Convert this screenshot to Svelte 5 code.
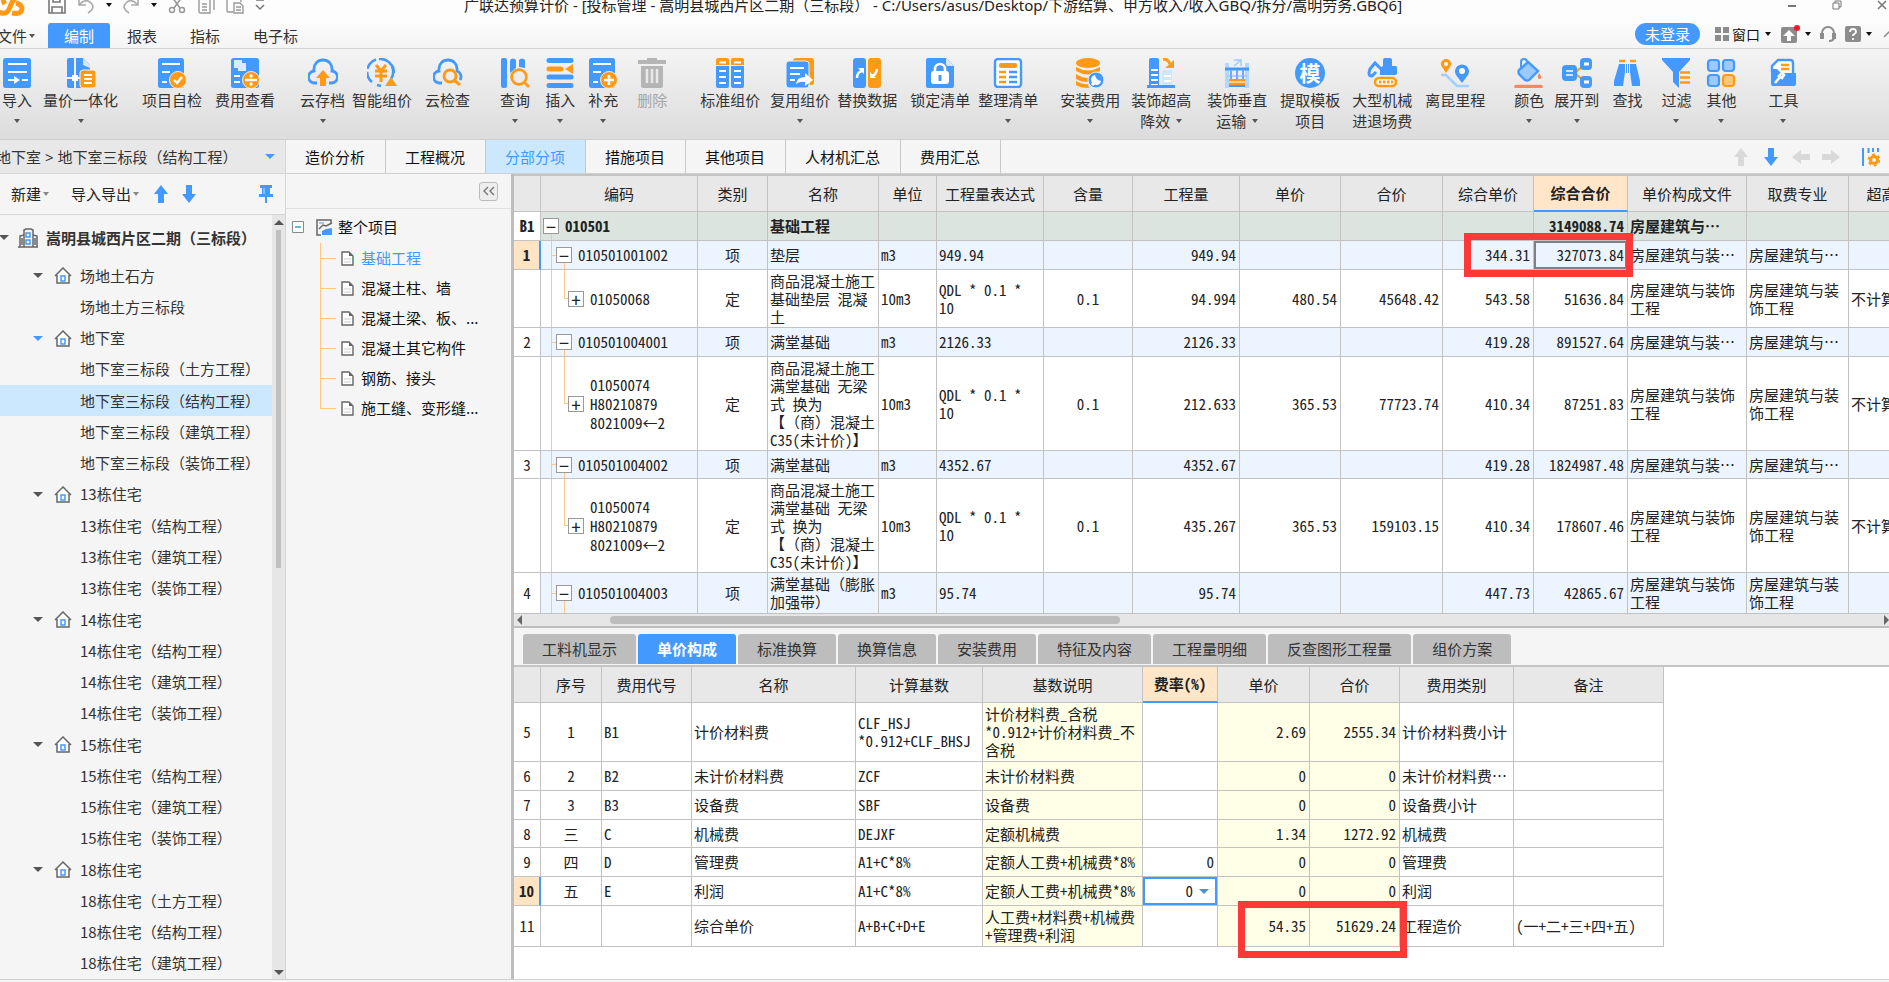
<script>
    const B = '#4499ff';
    const O = '#ff9a16';

    // inner markup of the 30x30 toolbar icons
    const icons = {
        import: `<rect x="1" width="28" height="30" rx="2.5" fill="${B}"/><path d="M6 6h19M6 14h19M6 22h9M20 22h6" stroke="#fff" stroke-width="2"/><path d="M12 18l6 4-6 4z" fill="#fff"/>`,
        quantity: `<path d="M1 2a2 2 0 0 1 2-2h14l7 7v23H3a2 2 0 0 1-2-2z" fill="${B}"/><path d="M17 0l7 7v3l-7-3z" fill="#d3e8ff"/><path d="M9 0v30M0 20h15" stroke="#f2f2f2" stroke-width="2"/><rect x="6" y="17" width="6" height="6" fill="#fff"/><rect x="14" y="12" width="16" height="18" rx="3" fill="${O}" stroke="#efefef"/><path d="M18 17h8M18 21h8M18 25h8" stroke="#fff" stroke-width="2"/>`,
        check: `<rect x="1" width="26" height="30" rx="2.5" fill="${B}"/><path d="M5 6h18M5 14h8M5 24h5" stroke="#fff" stroke-width="2"/><circle cx="21" cy="22" r="8.5" fill="${O}" stroke="#eee"/><path d="M17 22l3 3 5-6" fill="none" stroke="#fff" stroke-width="2.4"/>`,
        fee: `<rect x="1" width="28" height="30" rx="2.5" fill="${B}"/><path d="M4 2h8v8H4zM8 5h8v8H8z" fill="#d9ebff"/><path d="M4 18h6M4 24h6" stroke="#fff" stroke-width="2.2"/><circle cx="21" cy="22" r="8.5" fill="${O}" stroke="#eee"/><path d="M15 22h12" stroke="#fff" stroke-width="2.4"/><circle cx="21" cy="18" r="1.7" fill="#fff"/><circle cx="21" cy="26" r="1.7" fill="#fff"/>`,
        cloudUp: `<path d="M9 25H7a6 6 0 0 1-1-12C5 6 10 2 15 2s10 4 9 11a6 6 0 0 1-1 12h-2" fill="none" stroke="${B}" stroke-width="2.8"/><path d="M15 12l7 8h-4v8h-6v-8H8z" fill="${O}"/>`,
        smart: `<path d="M24 21A13 13 0 1 0 5 24M10 27l4 1M22 4l4 5 1 6" fill="none" stroke="${B}" stroke-width="2.6" stroke-dasharray="13 3"/><path d="M9 7l5 6 5-6M8 13h12M8 18h12M14 13v11" fill="none" stroke="${O}" stroke-width="3"/><path d="M24 19l6 9H18z" fill="${O}"/>`,
        cloudFind: `<path d="M9 25H7a6 6 0 0 1-1-12C5 6 10 2 15 2s10 4 9 11a6 6 0 0 1 3 9" fill="none" stroke="${B}" stroke-width="2.8"/><circle cx="17" cy="18" r="6" fill="none" stroke="${O}" stroke-width="2.8"/><path d="M21 22l6 5" stroke="${O}" stroke-width="3"/>`,
        query: `<rect x="1" width="6" height="30" rx="2" fill="${B}"/><path d="M10 2q3-3 6 0v8l-6 5zM19 2q3-3 6 0v8l-6-1z" fill="${B}"/><circle cx="19" cy="19" r="7.4" fill="none" stroke="${O}" stroke-width="2.6"/><path d="M24 24l5 5" stroke="${O}" stroke-width="2.8"/>`,
        insert: `<path d="M4 2.500h22M4 19h22M4 27.500h22" stroke="${B}" stroke-width="5" stroke-linecap="round"/><path d="M4 11h12" stroke="${O}" stroke-width="5" stroke-linecap="round"/><path d="M28 6v10l-8-5z" fill="${O}"/>`,
        add: `<rect x="1" width="26" height="30" rx="2.500" fill="${B}"/><path d="M5 6h18M5 14h8M5 24h5" stroke="#fff" stroke-width="2"/><circle cx="21" cy="22" r="8.5" fill="${O}" stroke="#eee"/><path d="M16 22h10M21 17v10" stroke="#fff" stroke-width="2.6"/>`,
        trash: `<path d="M10 0h10v2h9v4H1V2h9zM4 8h22v20q0 2-2 2H6q-2 0-2-2z" fill="#b5b5b5"/><path d="M10 11v14M15 11v14M20 11v14" stroke="#e9e9e9" stroke-width="2.5"/>`,
        standard: `<path d="M1 7V2q0-2 2-2h9q2 0 2 2v5zM16 7V2q0-2 2-2h9q2 0 2 2v5z" fill="${O}"/><path d="M1 8h13v20q0 2-2 2H3q-2 0-2-2zM16 8h13v20q0 2-2 2h-9q-2 0-2-2z" fill="${B}"/><path d="M4 4.500h7M19 4.500h7M4 13h7M19 13h7M4 19h7M19 19h7M4 25h7M19 25h7" stroke="#fff" stroke-width="2"/>`,
        reuse: `<rect x="8" width="21" height="27" rx="3" fill="${O}"/><rect x="1" y="3" width="23" height="27" rx="3" fill="${B}" stroke="#eee"/><path d="M5 10h14M5 16h10M5 22h5" stroke="#fff" stroke-width="2"/><path d="M11 26q1-7 9-7v-4l8 7-8 6v-4q-5-1-9 2z" fill="#fff"/>`,
        replace: `<rect x="1" width="13" height="30" rx="3" fill="${B}"/><rect x="16" width="13" height="30" rx="3" fill="${O}"/><path d="M5 20q0-6 5-7M20 18q4-1 5-7" stroke="#fff" stroke-width="2.4" fill="none"/><path d="M6 10h6v6zM18 14v6h6z" fill="#fff"/>`,
        lock: `<path d="M3 0h18l8 8v20q0 2-2 2H3q-2 0-2-2V2q0-2 2-2z" fill="${B}"/><path d="M21 0v6q0 2 2 2h6z" fill="#d3e8ff"/><rect x="6" y="13" width="18" height="13" rx="3" fill="#fff"/><path d="M10 14v-3a5 5 0 0 1 10 0v3" stroke="#fff" stroke-width="2.6" fill="none"/><path d="M15 17v6" stroke="${B}" stroke-width="3"/>`,
        arrange: `<rect x="2" y="1" width="26" height="28" rx="3" fill="#fff" stroke="${B}" stroke-width="2.4"/><rect x="6" y="5" width="18" height="5" rx="2" fill="${O}"/><path d="M6 14h7M6 19h7M6 24h7" stroke="${O}" stroke-width="2.4"/><path d="M16 14h8M16 19h8M16 24h8" stroke="${B}" stroke-width="2.4"/>`,
        install: `<ellipse cx="13" cy="5" rx="12" ry="5" fill="${O}"/><path d="M1 9q12 7 24 0v4q-12 7-24 0zM1 16q6 4 12 4v4Q6 24 1 21zM1 23q6 4 12 3l1 4Q5 30 1 27z" fill="${O}"/><circle cx="21" cy="22" r="8" fill="${B}" stroke="#eee"/><path d="M17 27l4-4" stroke="#fff" stroke-width="3"/><path d="M20 17a5 5 0 1 0 6 6l-3-1-2-2z" fill="#fff"/>`,
        high: `<path d="M3 30V2q0-2 2-2h6q2 0 2 2v28z" fill="${B}"/><path d="M5 12h7M5 17h7M5 22h7M5 27h7" stroke="#fff" stroke-width="2"/><path d="M16 28V14q0-2 2-2h8v16z" fill="#cfe6ff"/><path d="M18 18h7M18 23h7" stroke="#fff" stroke-width="2"/><path d="M1 28.500h28" stroke="${B}" stroke-width="3"/><path d="M17 1q5 0 7 5" fill="none" stroke="${O}" stroke-width="3"/><path d="M19 10h9V2z" fill="${O}"/>`,
        vertical: `<path d="M3 5h4v25H3zM23 5h4v25h-4z" fill="#b5d7ff"/><path d="M5 18h20M12 2h7v6M12 8l7-6" stroke="#9ccaff" stroke-width="1.5" fill="none"/><path d="M3 11h24" stroke="${B}" stroke-width="3"/><path d="M9 12v9M15 12v9M21 12v9" stroke="#6badff" stroke-width="2"/><path d="M7 21h16v6H7z" fill="${O}"/><path d="M7 24h16" stroke="#fff"/><path d="M7 28h16" stroke="${B}" stroke-width="2"/>`,
        template: `<circle cx="15" cy="15" r="15" fill="${B}"/><text x="15" y="23" text-anchor="middle" font-size="21" font-weight="700" fill="#fff">模</text>`,
        machine: `<path d="M13 17V10l3-2V2q0-2 2-2h5q2 0 2 2v6h4q1 0 1 2v5q0 2-3 2z" fill="${B}"/><path d="M15 12L8 5 3 11l-1 4q0 3 3 3l4-4" fill="none" stroke="${B}" stroke-width="3"/><rect x="8" y="20" width="21" height="8" rx="4" fill="#fff" stroke="${O}" stroke-width="2.6"/><path d="M12 24h14" stroke="${O}" stroke-width="3" stroke-dasharray="2.500 1.500"/>`,
        mileage: `<path d="M6 15L2 9A5 5 0 1 1 10 9z" fill="${O}"/><circle cx="6" cy="6" r="2" fill="#fff"/><path d="M22 25L16 17a7 7 0 1 1 12 0z" fill="${B}"/><circle cx="22" cy="13" r="3" fill="#fff"/><path d="M1 17h5l11 11h12" stroke="#a3cfff" stroke-width="2.6" fill="none"/>`,
        color: `<path d="M7 10V4q0-3 3-3t3 3" fill="none" stroke="${B}" stroke-width="2"/><path d="M14 4l10 9-9 9q-2 1-4 0l-6-6q-1-2 0-4z" fill="#9ccaff" stroke="${B}" stroke-width="2.4"/><path d="M25 15q4 5 1 6-4 0-1-6z" fill="#fb8761"/><path d="M2 28.500h25" stroke="#fb8761" stroke-width="3.5" stroke-linecap="round"/>`,
        expand: `<path d="M14 14l8-7M14 16l8 7" stroke="${O}" stroke-width="2"/><rect x="0" y="7" width="15" height="16" rx="4" fill="${B}"/><path d="M4 13h7M4 17h7" stroke="#cfe5ff" stroke-width="2"/><rect x="18" width="12" height="12" rx="4" fill="${B}"/><rect x="18" y="18" width="12" height="12" rx="4" fill="${B}"/><path d="M22 6h5M22 24h5" stroke="#fff" stroke-width="3"/>`,
        find: `<path d="M7 3h6M18 3h6" stroke="${O}" stroke-width="2.4"/><path d="M7 6h6v8l-2 14H2V23zM18 6h6l4 17v5h-8l-2-14z" fill="${B}"/><path d="M14 6h1v9h-1zM16 6h1v9h-1z" fill="${B}"/>`,
        filter: `<path d="M1 0h28v2L18 14v16l-6-6V14L1 2z" fill="${B}"/><path d="M19 14.500h10M19 19.500h10M19 24.500h10" stroke="${O}" stroke-width="2.6"/>`,
        other: `<g stroke-width="2.2"><rect x="2" y="2" width="11" height="11" rx="3" fill="#9ccaff" stroke="${B}"/><rect x="17" y="2" width="11" height="11" rx="3" fill="#9ccaff" stroke="${B}"/><rect x="2" y="17" width="11" height="11" rx="3" fill="#9ccaff" stroke="${B}"/><rect x="17" y="17" width="11" height="11" rx="3" fill="#ffc77d" stroke="${O}"/></g>`,
        tools: `<path d="M4 14V8l6-6h12q3 0 3 3v10" fill="#fff" stroke="${B}" stroke-width="2.4"/><path d="M13 7h8M13 11h8" stroke="${O}" stroke-width="2.4"/><path d="M3 12q0-1 2-1h4l4 4h15v11q0 2-2 2H5q-2 0-2-2z" fill="${B}"/><path d="M7 25l5-6M14 15l-3 3 3 2 2-3z" stroke="#fff" stroke-width="2.6" fill="none"/>`
    };

    // gap is the distance to the button on the left
    const ribbon = [
        { icon: 'import', label: '导入', gap: 2, menu: true },
        { icon: 'quantity', label: '量价一体化', gap: 11, menu: true },
        { icon: 'check', label: '项目自检', gap: 24 },
        { icon: 'fee', label: '费用查看', gap: 13 },
        { icon: 'cloudUp', label: '云存档', gap: 25, menu: true },
        { icon: 'smart', label: '智能组价', gap: 7 },
        { icon: 'cloudFind', label: '云检查', gap: 13 },
        { icon: 'query', label: '查询', gap: 30, menu: true },
        { icon: 'insert', label: '插入', gap: 15, menu: true },
        { icon: 'add', label: '补充', gap: 13, menu: true },
        { icon: 'trash', label: '删除', gap: 19, disabled: true },
        { icon: 'standard', label: '标准组价', gap: 33 },
        { icon: 'reuse', label: '复用组价', gap: 10, menu: true },
        { icon: 'replace', label: '替换数据', gap: 7 },
        { icon: 'lock', label: '锁定清单', gap: 13 },
        { icon: 'arrange', label: '整理清单', gap: 8, menu: true },
        { icon: 'install', label: '安装费用', gap: 22, menu: true },
        { icon: 'high', label: '装饰超高', second: '降效', gap: 11, menu: true },
        { icon: 'vertical', label: '装饰垂直', second: '运输', gap: 16, menu: true },
        { icon: 'template', label: '提取模板', second: '项目', gap: 13 },
        { icon: 'machine', label: '大型机械', second: '进退场费', gap: 12 },
        { icon: 'mileage', label: '离昆里程', gap: 13 },
        { icon: 'color', label: '颜色', gap: 29, menu: true },
        { icon: 'expand', label: '展开到', gap: 10, menu: true },
        { icon: 'find', label: '查找', gap: 13 },
        { icon: 'filter', label: '过滤', gap: 19, menu: true },
        { icon: 'other', label: '其他', gap: 15, menu: true },
        { icon: 'tools', label: '工具', gap: 32, menu: true }
    ];

    const menus = ['编制', '报表', '指标', '电子标'];
    let activeMenu = '编制';

    const pages = ['造价分析', '工程概况', '分部分项', '措施项目', '其他项目', '人材机汇总', '费用汇总'];
    let activePage = '分部分项';

    const tree = [
        { name: '场地土石方', items: ['场地土方三标段'] },
        { name: '地下室', open: true, items: ['地下室三标段（土方工程）', '地下室三标段（结构工程）', '地下室三标段（建筑工程）', '地下室三标段（装饰工程）'] },
        { name: '13栋住宅', items: ['13栋住宅（结构工程）', '13栋住宅（建筑工程）', '13栋住宅（装饰工程）'] },
        { name: '14栋住宅', items: ['14栋住宅（结构工程）', '14栋住宅（建筑工程）', '14栋住宅（装饰工程）'] },
        { name: '15栋住宅', items: ['15栋住宅（结构工程）', '15栋住宅（建筑工程）', '15栋住宅（装饰工程）'] },
        { name: '18栋住宅', items: ['18栋住宅（土方工程）', '18栋住宅（结构工程）', '18栋住宅（建筑工程）'] }
    ];
    let activeNode = '地下室三标段（结构工程）';

    const sections = ['基础工程', '混凝土柱、墙', '混凝土梁、板、...', '混凝土其它构件', '钢筋、接头', '施工缝、变形缝...'];
    let activeSection = '基础工程';

    const billCols = [
        { w: 27, t: '' },
        { w: 157, t: '编码' },
        { w: 70, t: '类别' },
        { w: 111, t: '名称' },
        { w: 58, t: '单位' },
        { w: 107, t: '工程量表达式' },
        { w: 89, t: '含量' },
        { w: 107, t: '工程量' },
        { w: 101, t: '单价' },
        { w: 102, t: '合价' },
        { w: 91, t: '综合单价' },
        { w: 94, t: '综合合价' },
        { w: 119, t: '单价构成文件' },
        { w: 102, t: '取费专业' },
        { w: 66, t: '超高' }
    ];
    const FILE = '房屋建筑与装饰\n工程';
    const MAJOR = '房屋建筑与装\n饰工程';
    const SLAB = '商品混凝土施工\n满堂基础 无梁\n式 换为\n【（商）混凝土\nC35(未计价)】';
    const EXPR = 'QDL * 0.1 *\n10';
    const bill = [
        { lv: 0, h: 29, no: 'B1', c: ['010501', '', '基础工程', '', '', '', '', '', '', '', '3149088.74', '房屋建筑与…', '', ''] },
        { lv: 1, h: 29, no: '1', on: true, c: ['010501001002', '项', '垫层', 'm3', '949.94', '', '949.94', '', '', '344.31', '327073.84', '房屋建筑与装…', '房屋建筑与…', ''] },
        { lv: 2, h: 58, no: '', c: ['01050068', '定', '商品混凝土施工\n基础垫层 混凝\n土', '10m3', EXPR, '0.1', '94.994', '480.54', '45648.42', '543.58', '51636.84', FILE, MAJOR, '不计算'] },
        { lv: 1, h: 29, no: '2', c: ['010501004001', '项', '满堂基础', 'm3', '2126.33', '', '2126.33', '', '', '419.28', '891527.64', '房屋建筑与装…', '房屋建筑与…', ''] },
        { lv: 2, h: 94, no: '', c: ['01050074\nH80210879\n8021009←2', '定', SLAB, '10m3', EXPR, '0.1', '212.633', '365.53', '77723.74', '410.34', '87251.83', FILE, MAJOR, '不计算'] },
        { lv: 1, h: 28, no: '3', c: ['010501004002', '项', '满堂基础', 'm3', '4352.67', '', '4352.67', '', '', '419.28', '1824987.48', '房屋建筑与装…', '房屋建筑与…', ''] },
        { lv: 2, h: 94, no: '', c: ['01050074\nH80210879\n8021009←2', '定', SLAB, '10m3', EXPR, '0.1', '435.267', '365.53', '159103.15', '410.34', '178607.46', FILE, MAJOR, '不计算'] },
        { lv: 1, h: 41, no: '4', c: ['010501004003', '项', '满堂基础（膨胀\n加强带）', 'm3', '95.74', '', '95.74', '', '', '447.73', '42865.67', FILE, MAJOR, ''] }
    ];
    const billAlign = ['', 'mid', '', '', '', 'mid', 'num', 'num', 'num', 'num', 'num', '', '', ''];

    const details = ['工料机显示', '单价构成', '标准换算', '换算信息', '安装费用', '特征及内容', '工程量明细', '反查图形工程量', '组价方案'];
    let activeDetail = '单价构成';

    const priceCols = [
        { w: 27, t: '' },
        { w: 61, t: '序号' },
        { w: 90, t: '费用代号' },
        { w: 164, t: '名称' },
        { w: 127, t: '计算基数' },
        { w: 160, t: '基数说明' },
        { w: 75, t: '费率(%)' },
        { w: 92, t: '单价' },
        { w: 90, t: '合价' },
        { w: 114, t: '费用类别' },
        { w: 150, t: '备注' }
    ];
    const priceAlign = ['mid', '', '', '', 'calc', 'num', 'num calc', 'num calc', '', ''];
    const price = [
        { no: '5', h: 59, c: ['1', 'B1', '计价材料费', 'CLF_HSJ\n*0.912+CLF_BHSJ', '计价材料费_含税\n*0.912+计价材料费_不\n含税', '', '2.69', '2555.34', '计价材料费小计', ''] },
        { no: '6', h: 29, c: ['2', 'B2', '未计价材料费', 'ZCF', '未计价材料费', '', '0', '0', '未计价材料费…', ''] },
        { no: '7', h: 29, c: ['3', 'B3', '设备费', 'SBF', '设备费', '', '0', '0', '设备费小计', ''] },
        { no: '8', h: 28, c: ['三', 'C', '机械费', 'DEJXF', '定额机械费', '', '1.34', '1272.92', '机械费', ''] },
        { no: '9', h: 29, c: ['四', 'D', '管理费', 'A1+C*8%', '定额人工费+机械费*8%', '0', '0', '0', '管理费', ''] },
        { no: '10', h: 29, on: true, c: ['五', 'E', '利润', 'A1+C*8%', '定额人工费+机械费*8%', '0', '0', '0', '利润', ''] },
        { no: '11', h: 41, c: ['', '', '综合单价', 'A+B+C+D+E', '人工费+材料费+机械费\n+管理费+利润', '', '54.35', '51629.24', '工程造价', '(一+二+三+四+五)'] }
    ];
    let rate = '0';
</script>

{#snippet arrow(dir, color)}
    <svg class="arrow {dir}" width="20" height="20" viewBox="0 0 20 20"><path d="M10 1l7 9h-4v9H7v-9H3z" fill={color} /></svg>
{/snippet}

<div class="app">
    <header class="title">
        <div class="quick">
            <svg class="logo" width="26" height="24" viewBox="0 0 26 24"><path d="M0 19q8 4 11-5t9-11M6 11q-4-6 1-8M13 20q10 2 10-5-1-4-6-5" fill="none" stroke="#ff9a16" stroke-width="5" /></svg>
            <button aria-label="保存"><svg width="18" height="18" viewBox="0 0 18 18"><path d="M1 1h13l3 3v13H1zM4 17v-6h10v6M5 1v5h7V1" fill="none" stroke="#777" stroke-width="1.600" /></svg></button>
            <button aria-label="撤销"><svg width="18" height="18" viewBox="0 0 18 18"><path d="M2 2v7h7M3 8q6-6 11-1t-3 10" fill="none" stroke="#aaa" stroke-width="1.600" /></svg></button>
            <i class="caret dark"></i>
            <button class="redo" aria-label="重做"><svg width="18" height="18" viewBox="0 0 18 18"><path d="M16 2v7H9M15 8Q9 2 4 7t3 10" fill="none" stroke="#aaa" stroke-width="1.600" /></svg></button>
            <i class="caret dark"></i>
            <button class="cut" aria-label="剪切"><svg width="18" height="18" viewBox="0 0 18 18"><path d="M4 1l8 11M14 1L6 12" stroke="#999" stroke-width="1.600" /><circle cx="4" cy="14" r="2.500" fill="none" stroke="#999" stroke-width="1.500" /><circle cx="14" cy="14" r="2.500" fill="none" stroke="#999" stroke-width="1.500" /></svg></button>
            <button aria-label="复制"><svg width="18" height="18" viewBox="0 0 18 18"><path d="M5 1h10q2 0 2 2v11M2 3h9q2 0 2 2v12H4q-2 0-2-2zM5 8h5M5 11h5M5 14h5" fill="none" stroke="#999" stroke-width="1.400" /></svg></button>
            <button aria-label="粘贴"><svg width="18" height="18" viewBox="0 0 18 18"><path d="M7 16H2q-1 0-1-2V2h14v4M8 7h6l3 3v7H8zM10 11h5M10 14h5" fill="none" stroke="#999" stroke-width="1.400" /></svg></button>
            <svg width="10" height="12" viewBox="0 0 10 12"><path d="M1 1h8M1 6l4 4 4-4" fill="none" stroke="#777" stroke-width="1.500" /></svg>
        </div>
        <h1>广联达预算计价 - [投标管理 - 嵩明县城西片区二期（三标段） - C:/Users/asus/Desktop/下游结算、甲方收入/收入GBQ/拆分/嵩明劳务.GBQ6]</h1>
        <div class="window">
            <button aria-label="最小化"><svg width="10" height="10" viewBox="0 0 10 10"><path d="M1 6h8" stroke="#777" stroke-width="2" /></svg></button>
            <button aria-label="还原"><svg width="10" height="10" viewBox="0 0 10 10"><path d="M1 3h6v6H1zM3 3V1h6v6H7" fill="none" stroke="#777" /></svg></button>
            <button aria-label="关闭"><svg width="10" height="10" viewBox="0 0 10 10"><path d="M1 1l8 8M9 1L1 9" stroke="#777" stroke-width="1.500" /></svg></button>
        </div>
    </header>

    <nav class="menubar">
        <button class="file">文件<i class="caret"></i></button>
        {#each menus as m}
            <button class="menu" class:active={m === activeMenu} on:click={() => (activeMenu = m)}>{m}</button>
        {/each}
        <div class="account">
            <button class="login">未登录</button>
            <button class="win">
                <svg width="14" height="14" viewBox="0 0 14 14"><path d="M0 0h6v6H0zM8 0h6v6H8zM0 8h6v6H0zM8 8h6v6H8z" fill="#8c8c8c" /></svg>
                窗口<i class="caret dark"></i>
            </button>
            <button class="tool" aria-label="升级">
                <svg width="20" height="20" viewBox="0 0 20 20"><rect x="1" y="3" width="16" height="16" rx="2" fill="#8c8c8c" /><path d="M9 6l6 6h-4v5H7v-5H3z" fill="#fff" /><circle cx="17" cy="4" r="3" fill="#f0182a" /></svg>
                <i class="caret dark"></i>
            </button>
            <button class="tool" aria-label="客服"><svg width="18" height="18" viewBox="0 0 18 18"><path d="M3 10V8a6 6 0 0 1 12 0v4q0 4-5 4" fill="none" stroke="#8c8c8c" stroke-width="2" /><path d="M1 8h4v6H1zM13 8h4v6h-4z" fill="#8c8c8c" /></svg></button>
            <button class="tool" aria-label="帮助"><svg width="16" height="16" viewBox="0 0 16 16"><rect width="16" height="16" rx="2" fill="#8c8c8c" /><path d="M5 6q0-3 3-3t3 3q0 1-3 3v1M8 12v2" fill="none" stroke="#fff" stroke-width="1.800" /></svg><i class="caret dark"></i></button>
            <svg width="12" height="8" viewBox="0 0 12 8"><path d="M1 7l5-5 5 5" fill="none" stroke="#888" stroke-width="1.500" /></svg>
        </div>
    </nav>

    <div class="ribbon">
        {#each ribbon as r}
            <button disabled={r.disabled} style="margin-left:{r.gap}px">
                <svg width="30" height="30" viewBox="0 0 30 30">{@html icons[r.icon]}</svg>
                <span>{r.label}</span>
                <span class="second">{r.second ?? ''}{#if r.menu}<i class="caret"></i>{/if}</span>
            </button>
        {/each}
    </div>

    <div class="body">
        <aside class="project">
            <button class="crumb">地下室 &gt; 地下室三标段（结构工程）<i class="caret big blue"></i></button>
            <div class="bar">
                <button>新建<i class="caret"></i></button>
                <button class="io">导入导出<i class="caret"></i></button>
                <button aria-label="上移">{@render arrow('up', B)}</button>
                <button aria-label="下移">{@render arrow('down', B)}</button>
                <button class="pin" aria-label="固定"><svg width="14" height="20" viewBox="0 0 14 20"><path d="M1 1h12v3h-2v6h3v3H8v6H6v-6H0v-3h3V4H1z" fill={B} /><path d="M5 4v6" stroke="#cde4ff" /></svg></button>
            </div>
            <div class="treebox">
                <ul class="tree">
                    <li class="root">
                        <i class="caret big"></i>
                        <svg width="20" height="20" viewBox="0 0 20 20"><path d="M6 19V2l2-1h5l2 1v17M6 7l-4 1v11M15 7l4 1v11M0 19h20M4 10v7M17 10v7" fill="none" stroke="#666" stroke-width="1.500" /><path d="M8 5h4v4H8zM8 12h4v4H8z" fill="none" stroke={B} stroke-width="1.500" /></svg>
                        {'嵩明县城西片区二期（三标段）'}
                    </li>
                    {#each tree as g}
                        <li class="group">
                            <i class="caret big" class:blue={g.open}></i>
                            <svg width="18" height="17" viewBox="0 0 18 17"><path d="M1 9l8-8 8 8M3 8v8h12V8" fill="#fff" stroke="#666" stroke-width="1.500" /><path d="M7 9h4v5H7z" fill="none" stroke={B} stroke-width="1.500" /></svg>
                            {g.name}
                        </li>
                        {#each g.items as name}
                            <li class="leaf" class:active={name === activeNode}>
                                <button on:click={() => (activeNode = name)}>{name}</button>
                            </li>
                        {/each}
                    {/each}
                </ul>
                <div class="vscroll">
                    <i class="caret big flip"></i>
                    <div class="track"><div class="thumb"></div></div>
                    <i class="caret big"></i>
                </div>
            </div>
        </aside>

        <div class="work">
            <div class="pages">
                {#each pages as p}
                    <button class:active={p === activePage} on:click={() => (activePage = p)}>{p}</button>
                {/each}
                <div class="moves">
                    <button aria-label="上移">{@render arrow('up', '#d9d9d9')}</button>
                    <button aria-label="下移">{@render arrow('down', B)}</button>
                    <button aria-label="左移">{@render arrow('left', '#d9d9d9')}</button>
                    <button aria-label="右移">{@render arrow('right', '#d9d9d9')}</button>
                    <button class="columns" aria-label="列设置"><svg width="18" height="20" viewBox="0 0 18 20"><path d="M1 1v18M6.500 1v5M11 1v4M16 1v4" stroke={B} stroke-width="2" /><circle cx="12" cy="13" r="3.500" fill="none" stroke={O} stroke-width="3" /><circle cx="12" cy="13" r="5.500" fill="none" stroke={O} stroke-width="2" stroke-dasharray="2.900 2.900" /></svg></button>
                </div>
            </div>

            <div class="split">
                <aside class="sections">
                    <div class="fold"><button aria-label="收起"><svg width="14" height="12" viewBox="0 0 14 12"><path d="M6 2L2 6l4 4M12 2L8 6l4 4" fill="none" stroke="#777" stroke-width="1.400" /></svg></button></div>
                    <div class="whole">
                        <svg width="12" height="12" viewBox="0 0 12 12"><path d="M.5.5h11v11H.5z" fill="#fff" stroke="#888" /><path d="M3 6h6" stroke="#35a3c8" stroke-width="1.500" /></svg>
                        <svg width="17" height="17" viewBox="0 0 17 17"><path d="M15 4V1H1v15h4M3 10l4-4 3 1 6-3" fill="none" stroke="#666" stroke-width="1.500" /><path d="M6 16v-4l4-2 6-1v7z" fill={B} /><path d="M3 4h5" stroke={B} /></svg>
                        <span>整个项目</span>
                    </div>
                    <ul>
                        {#each sections as s}
                            <li>
                                <svg width="13" height="15" viewBox="0 0 13 15"><path d="M1 1h7l4 4v9H1z" fill="#fff" stroke="#666" stroke-width="1.400" /><path d="M8 1v4h4z" fill="#666" /><path d="M3 8h7M3 11h7" stroke="#ccc" /></svg>
                                <button class:active={s === activeSection} on:click={() => (activeSection = s)}>{s}</button>
                            </li>
                        {/each}
                    </ul>
                </aside>

                <main>
                    <div class="grid">
                        <table class="bill">
                            <colgroup>
                                {#each billCols as col}<col style="width:{col.w}px" />{/each}
                            </colgroup>
                            <thead>
                                <tr>{#each billCols as col, i}<th class:hot={i === 11}>{col.t}</th>{/each}</tr>
                            </thead>
                            <tbody>
                                {#each bill as row}
                                    <tr class="lv{row.lv}" style="height:{row.h}px">
                                        <th class:current={row.on}>{row.no}</th>
                                        {#each row.c as cell, i}
                                            {#if i === 0}
                                                <td class="code">
                                                    <div><button aria-label="展开或收起">{row.lv === 2 ? '+' : '−'}</button><span>{cell}</span></div>
                                                </td>
                                            {:else}
                                                <td class={billAlign[i]} class:picked={row.on && i === 10}>{cell}</td>
                                            {/if}
                                        {/each}
                                    </tr>
                                {/each}
                            </tbody>
                        </table>
                        <div class="mark top"></div>
                    </div>
                    <div class="hscroll">
                        <i class="tri left"></i>
                        <div class="track"><div class="thumb"></div></div>
                        <i class="tri right"></i>
                    </div>

                    <div class="details">
                        {#each details as d}
                            <button class:active={d === activeDetail} on:click={() => (activeDetail = d)}>{d}</button>
                        {/each}
                    </div>
                    <div class="grid lower">
                        <table class="price">
                            <colgroup>
                                {#each priceCols as col}<col style="width:{col.w}px" />{/each}
                            </colgroup>
                            <thead>
                                <tr>{#each priceCols as col, i}<th class:hot={i === 6}>{col.t}</th>{/each}</tr>
                            </thead>
                            <tbody>
                                {#each price as row}
                                    <tr style="height:{row.h}px">
                                        <th class:current={row.on}>{row.no}</th>
                                        {#each row.c as cell, i}
                                            {#if row.on && i === 5}
                                                <td class="edit">
                                                    <div>
                                                        <select aria-label="费率" bind:value={rate}><option>0</option></select>
                                                        <i class="caret big steel"></i>
                                                    </div>
                                                </td>
                                            {:else}
                                                <td class={priceAlign[i]}>{cell}</td>
                                            {/if}
                                        {/each}
                                    </tr>
                                {/each}
                            </tbody>
                        </table>
                        <div class="mark bottom"></div>
                    </div>
                </main>
            </div>
        </div>
    </div>
    <footer></footer>
</div>

<style>
    :global(body) {
        margin: 0;
        overflow: hidden;
    }

    .app {
        display: flex;
        flex-direction: column;
        height: 100vh;
        overflow: hidden;
        background: #f5f5f5;
        color: #333;
        font: 15px/20px 'Noto Sans CJK SC', sans-serif;
        text-spacing-trim: space-all;
    }

    button {
        display: flex;
        align-items: center;
        padding: 0;
        border: 0;
        background: none;
        color: inherit;
        font: inherit;
        white-space: nowrap;
    }

    ul {
        margin: 0;
        padding: 0;
        list-style: none;
    }

    svg {
        flex: none;
        display: block;
    }

    .caret {
        flex: none;
        border: 3px solid transparent;
        border-top: 4px solid #555;
        border-bottom: 0;
    }
    .caret.dark {
        border-top-color: #111;
    }
    .caret.big {
        border-width: 5px 5px 0;
    }
    .caret.blue {
        border-top-color: #4499ff;
    }
    .caret.steel {
        border-top-color: #4a93c8;
    }
    .caret.flip {
        transform: rotate(180deg);
    }

    .arrow.down {
        transform: rotate(180deg);
    }
    .arrow.left {
        transform: rotate(-90deg);
    }
    .arrow.right {
        transform: rotate(90deg);
    }

    /* the window sits partly above the top edge of the screen */
    .title {
        flex: none;
        display: flex;
        align-items: center;
        height: 36px;
        margin-top: -13px;
        background: #fdfdfd;
    }
    .quick {
        flex: none;
        display: flex;
        align-items: center;
        gap: 11px;
        width: 464px;
    }
    .quick .logo {
        margin: 0 12px 0 -1px;
    }
    .redo {
        margin-left: -1px;
    }
    .title h1 {
        margin: 0;
        font-family: 'Noto Sans', 'Noto Sans CJK SC', sans-serif;
        font-size: 15px;
        font-weight: 400;
        white-space: nowrap;
        color: #222;
    }
    .window {
        display: flex;
        gap: 35px;
        margin-left: auto;
        padding-right: 2px;
    }

    .menubar {
        flex: none;
        display: flex;
        gap: 1px;
        height: 25px;
        border-bottom: 1px solid #d4d4d4;
        background: linear-gradient(#fcfcfc, #f4f4f4);
    }
    .file {
        gap: 2px;
        margin: 0 12px 0 -3px;
    }
    .menu {
        padding: 0 16px;
        border-radius: 3px 3px 0 0;
    }
    .menu.active {
        background: #4499ff;
        color: #fff;
    }
    .account {
        display: flex;
        align-items: center;
        margin-left: auto;
        height: 22px;
    }
    .login {
        height: 22px;
        padding: 0 10px;
        border-radius: 11px;
        background: #4499ff;
        color: #fff;
    }
    .win {
        margin-left: 15px;
        gap: 3px;
        font-size: 14px;
        color: #111;
    }
    .win .caret {
        margin-left: 2px;
    }
    .tool {
        gap: 5px;
        margin-left: 9px;
    }
    .tool + .tool {
        margin-left: 8px;
    }
    .account > svg {
        margin: 0 -6px 0 11px;
    }

    .ribbon {
        flex: none;
        display: flex;
        align-items: flex-start;
        height: 90px;
        border-bottom: 1px solid #d0d0d0;
        background: linear-gradient(#f4f4f4, #dcdcdc);
    }
    .ribbon button {
        flex: none;
        flex-direction: column;
        padding-top: 9px;
    }
    .ribbon button:disabled {
        color: #a5a5a5;
    }
    .ribbon span {
        height: 20px;
        margin-top: 2px;
    }
    .ribbon .second {
        display: flex;
        align-items: center;
        gap: 6px;
        margin-top: 1px;
    }

    .body {
        flex: 1;
        display: flex;
        min-height: 0;
    }

    .project {
        flex: none;
        display: flex;
        flex-direction: column;
        width: 285px;
        border-right: 1px solid #d6d6d6;
    }
    .crumb {
        flex: none;
        justify-content: space-between;
        height: 34px;
        padding-right: 10px;
        margin-left: -4px;
        background: #e8e8e8;
        border-bottom: 1px solid #d6d6d6;
        font-family: 'Noto Sans', 'Noto Sans CJK SC', sans-serif;
    }
    .project .bar {
        flex: none;
        display: flex;
        align-items: center;
        height: 40px;
        padding: 0 12px 0 11px;
        border-bottom: 1px solid #d6d6d6;
    }
    .bar button {
        gap: 2px;
        margin-right: 8px;
        color: #222;
    }
    .bar .io {
        margin: 0 12px 0 14px;
    }
    .bar .caret {
        border-top-color: #888;
    }
    .bar .pin {
        margin: 0 0 0 auto;
    }
    .treebox {
        flex: 1;
        display: flex;
        min-height: 0;
    }
    .tree {
        flex: 1;
        display: flex;
        flex-direction: column;
    }
    .tree li {
        flex: 1;
        display: flex;
        align-items: center;
    }
    .tree .root {
        flex: none;
        height: 45px;
        gap: 8px;
        font-weight: 700;
    }
    .root .caret {
        margin: 0 1px 0 -1px;
    }
    .group {
        gap: 8px;
        padding-left: 33px;
    }
    .group svg {
        margin-left: 3px;
    }
    .leaf {
        padding-left: 80px;
    }
    .leaf.active {
        background: #cce8ff;
    }
    .vscroll {
        display: flex;
        flex-direction: column;
        align-items: center;
        width: 13px;
        padding: 5px 0 4px;
        background: #e6e6e6;
    }
    .vscroll .track {
        flex: 1;
        width: 5px;
        padding: 5px 0;
    }
    .vscroll .thumb {
        height: 46%;
        background: #bfbfbf;
    }

    .work {
        flex: 1;
        display: flex;
        flex-direction: column;
        min-width: 0;
    }
    .pages {
        flex: none;
        display: flex;
        height: 33px;
        border-bottom: 1px solid #d0d0d0;
    }
    .pages > button {
        padding: 0 20px 0 19px;
        border-right: 1px solid #c8c8c8;
        color: #111;
    }
    .pages > button.active {
        background: #cce8ff;
        color: #4499ff;
    }
    .moves {
        display: flex;
        align-items: center;
        gap: 10px;
        margin-left: auto;
        padding-right: 9px;
    }
    .columns {
        margin-left: 11px;
    }

    .split {
        flex: 1;
        display: flex;
        min-height: 0;
    }
    .sections {
        flex: none;
        width: 225px;
        border-right: 3px solid #bdbdbd;
        color: #111;
    }
    .fold {
        display: flex;
        align-items: center;
        justify-content: flex-end;
        height: 34px;
        padding-right: 13px;
        border-bottom: 1px solid #e0e0e0;
    }
    .fold button {
        justify-content: center;
        width: 19px;
        height: 19px;
        border: 1px solid #bbb;
        border-radius: 3px;
        background: #eee;
    }
    .whole {
        display: flex;
        align-items: center;
        height: 32px;
        padding: 2px 0 0 6px;
    }
    .whole svg + svg {
        margin: 0 5px 0 12px;
    }
    .sections ul {
        padding-left: 34px;
    }
    .sections li {
        display: flex;
        align-items: center;
        gap: 7px;
        height: 30px;
        padding-left: 21px;
        background:
            linear-gradient(#ffc880, #ffc880) 0 0 / 1px 100% no-repeat,
            linear-gradient(#ffc880, #ffc880) 0 50% / 16px 1px no-repeat;
    }
    .sections li:last-child {
        background:
            linear-gradient(#ffc880, #ffc880) 0 0 / 1px 50% no-repeat,
            linear-gradient(#ffc880, #ffc880) 0 50% / 16px 1px no-repeat;
    }
    .sections li button.active {
        color: #4499ff;
    }

    main {
        flex: 1;
        display: flex;
        flex-direction: column;
        min-width: 0;
        background: #fff;
    }
    .grid {
        position: relative;
        flex: none;
        overflow: hidden;
        border-top: 2px solid #c4c4c4;
        font-family: 'Noto Sans Mono CJK SC', 'Noto Sans CJK SC', monospace;
    }
    .lower {
        flex: 1;
    }
    table {
        width: 0;
        table-layout: fixed;
        border-collapse: separate;
        border-spacing: 0;
        color: #222;
        line-height: 18px;
    }
    th,
    td {
        box-sizing: border-box;
        height: inherit;
        padding: 0 2px;
        border-right: 1px solid #c2c2c2;
        border-bottom: 1px solid #c2c2c2;
        font-weight: 400;
        text-align: left;
        white-space: pre;
        overflow: hidden;
    }
    thead tr {
        height: 36px;
    }
    thead th {
        padding: 0;
        background: #e8e8e8;
        text-align: center;
    }
    thead th.hot {
        background: #ffe6c8;
        border-bottom: 2px solid #4499ff;
        font-weight: 700;
    }
    tbody th {
        padding: 0;
        background: #fff;
        text-align: center;
    }
    tbody th.current {
        background: #ffe4c4;
        border-right: 2px solid #4499ff;
        font-weight: 700;
    }
    .mid {
        text-align: center;
    }
    .num {
        padding-right: 3px;
        text-align: right;
    }
    .calc {
        background: #ffffe8;
    }
    .lv0 th,
    .lv0 td {
        font-weight: 700;
    }
    .lv0 td {
        background-color: #dbe4de;
    }
    .lv1 td {
        background-color: #ecf4ff;
    }
    .code div {
        display: flex;
        align-items: center;
        gap: 6px;
    }
    .code button {
        box-sizing: border-box;
        justify-content: center;
        width: 16px;
        height: 16px;
        border: 1px solid #999;
        background: #fff;
        font-size: 18px;
        font-weight: 400;
        line-height: 14px;
    }
    /* connector lines of the outline */
    .lv0 .code {
        background: linear-gradient(#ffc880, #ffc880) 10px 22px / 1px 100% no-repeat #dbe4de;
    }
    .lv1 .code {
        padding-left: 15px;
        background:
            linear-gradient(#ffc880, #ffc880) 10px 0 / 1px 100% no-repeat,
            linear-gradient(#ffc880, #ffc880) 10px 50% / 5px 1px no-repeat,
            linear-gradient(#ffc880, #ffc880) 23px 100% / 1px 50% no-repeat #ecf4ff;
    }
    .lv2 .code {
        padding-left: 27px;
        line-height: 19px;
        background:
            linear-gradient(#ffc880, #ffc880) 10px 0 / 1px 100% no-repeat,
            linear-gradient(#ffc880, #ffc880) 23px 0 / 1px 50% no-repeat,
            linear-gradient(#ffc880, #ffc880) 23px 50% / 5px 1px no-repeat;
    }
    td.picked {
        box-shadow: inset 0 0 0 2px #808080;
    }
    .edit {
        padding: 0;
        box-shadow: inset 0 0 0 2px #4499ff;
    }
    .edit div {
        display: flex;
        align-items: center;
        padding-right: 8px;
    }
    .edit select {
        flex: 1;
        appearance: none;
        padding: 0 6px 0 0;
        border: 0;
        background: none;
        color: inherit;
        font: inherit;
        text-align-last: right;
    }

    .mark {
        position: absolute;
        box-sizing: border-box;
        width: 169px;
        border: 7px solid #fc3939;
    }
    .mark.top {
        left: 950px;
        top: 57px;
        height: 44px;
    }
    .mark.bottom {
        left: 724px;
        top: 234px;
        height: 57px;
    }

    .hscroll {
        flex: none;
        display: flex;
        align-items: center;
        height: 12px;
        padding: 0 0 0 3px;
        background: #e6e6e6;
        border-bottom: 2px solid #bdbdbd;
    }
    .hscroll .track {
        flex: 1;
        padding-left: 88px;
    }
    .hscroll .thumb {
        width: 40%;
        height: 8px;
        border-radius: 4px;
        background: #bdbdbd;
    }
    .tri {
        border: 5px solid transparent;
    }
    .tri.left {
        border-left: 0;
        border-right-color: #666;
    }
    .tri.right {
        border-right: 0;
        border-left-color: #666;
    }

    .details {
        flex: none;
        display: flex;
        gap: 2px;
        height: 31px;
        padding: 6px 0 0 9px;
        background: #f5f5f5;
    }
    .details button {
        height: 30px;
        padding: 0 19px;
        border-radius: 3px 3px 0 0;
        background: #bdbdbd;
    }
    .details button.active {
        background: #4499ff;
        color: #fff;
        font-weight: 700;
    }

    footer {
        flex: none;
        height: 2px;
        border-top: 1px solid #d0d0d0;
    }
</style>
